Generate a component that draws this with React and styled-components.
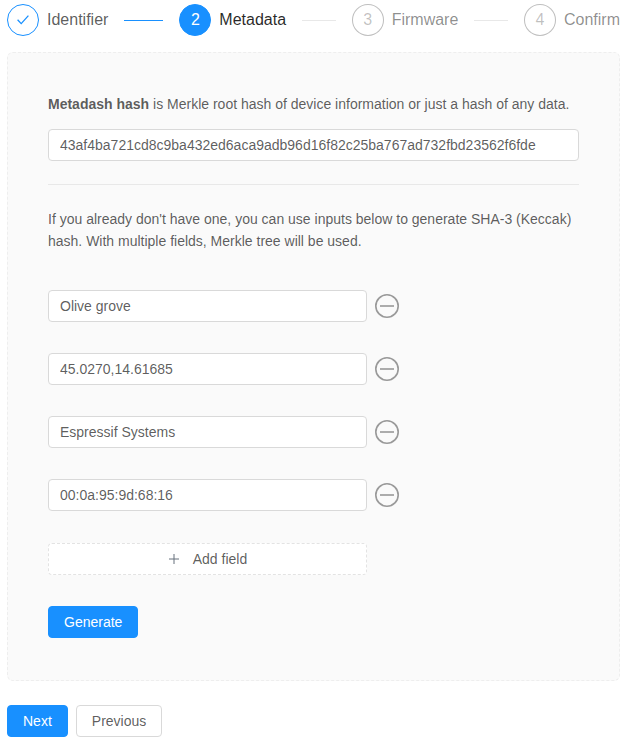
import React from "react";
import styled, { createGlobalStyle } from "styled-components";

const Global = createGlobalStyle`
  html, body { margin: 0; padding: 0; background: #fff; }
  body {
    font-family: "Liberation Sans", Arial, sans-serif;
    font-size: 14px;
    line-height: 22px;
    color: rgba(0, 0, 0, 0.65);
  }
  * { box-sizing: border-box; }
`;

const Page = styled.div`
  padding: 4px 7px 3px;
`;

const Steps = styled.div`
  display: flex;
  height: 32px;
`;

const Step = styled.div`
  display: flex;
  align-items: center;
  flex: ${(p) => (p.$last ? "none" : "1 1 0")};
  margin-right: ${(p) => (p.$last ? "0" : "16px")};
  min-width: 0;
`;

const StepIcon = styled.div`
  width: 32px;
  height: 32px;
  flex: none;
  border-radius: 50%;
  display: flex;
  align-items: center;
  justify-content: center;
  font-size: 16px;
  line-height: 1;
  border: 1px solid
    ${(p) => (p.$status === "wait" ? "rgba(0,0,0,0.25)" : "#1890ff")};
  background: ${(p) => (p.$status === "process" ? "#1890ff" : "#fff")};
  color: ${(p) =>
    p.$status === "process"
      ? "#fff"
      : p.$status === "wait"
      ? "rgba(0,0,0,0.25)"
      : "#1890ff"};
`;

const StepTitle = styled.div`
  margin-left: 8px;
  font-size: 16px;
  line-height: 32px;
  white-space: nowrap;
  color: ${(p) =>
    p.$status === "process"
      ? "rgba(0,0,0,0.85)"
      : p.$status === "wait"
      ? "rgba(0,0,0,0.45)"
      : "rgba(0,0,0,0.65)"};
`;

const StepLine = styled.div`
  flex: 1;
  height: 1px;
  margin-left: 16px;
  background: ${(p) => (p.$done ? "#1890ff" : "#e8e8e8")};
`;

const Panel = styled.div`
  margin-top: 16px;
  padding: 40px 40px 42px;
  height: 629px;
  background: #fafafa;
  border: 1px dashed #eeeeee;
  border-radius: 6px;
`;

const Paragraph = styled.p`
  margin: 0;
`;

const Strong = styled.strong`
  font-weight: 700;
`;

const TextInput = styled.input`
  display: block;
  width: 100%;
  height: 32px;
  padding: 4px 11px;
  font: inherit;
  font-size: 14px;
  color: rgba(0, 0, 0, 0.65);
  background: #fff;
  border: 1px solid #d9d9d9;
  border-radius: 4px;
  outline: none;
`;

const HashInput = styled(TextInput)`
  margin-top: 14px;
`;

const Divider = styled.hr`
  margin: 23px 0;
  height: 1px;
  border: 0;
  background: #e8e8e8;
`;

const Fields = styled.div`
  margin-top: 38px;
  display: flex;
  flex-direction: column;
  gap: 31px;
`;

const FieldRow = styled.div`
  display: flex;
  align-items: center;
  gap: 8px;
`;

const FieldInput = styled(TextInput)`
  width: 319px;
`;

const RemoveIcon = styled.svg`
  width: 24px;
  height: 24px;
  flex: none;
  display: block;
`;

const AddField = styled.button`
  display: flex;
  align-items: center;
  justify-content: center;
  gap: 13px;
  width: 319px;
  height: 32px;
  margin-top: 32px;
  padding: 0 15px;
  font: inherit;
  color: rgba(0, 0, 0, 0.65);
  background: #fff;
  border: 1px dashed #e3e3e3;
  border-radius: 4px;
`;

const Button = styled.button`
  display: block;
  height: 32px;
  padding: 0 15px;
  font: inherit;
  border-radius: 4px;
  border: 1px solid ${(p) => (p.$primary ? "#1890ff" : "#d9d9d9")};
  background: ${(p) => (p.$primary ? "#1890ff" : "#fff")};
  color: ${(p) => (p.$primary ? "#fff" : "rgba(0,0,0,0.65)")};
`;

const GenerateButton = styled(Button)`
  margin-top: 31px;
`;

const Actions = styled.div`
  display: flex;
  gap: 8px;
  margin-top: 24px;
`;

const steps = [
  { title: "Identifier", status: "finish" },
  { title: "Metadata", status: "process", n: 2 },
  { title: "Firmware", status: "wait", n: 3 },
  { title: "Confirm", status: "wait", n: 4 },
];

const fields = [
  "Olive grove",
  "45.0270,14.61685",
  "Espressif Systems",
  "00:0a:95:9d:68:16",
];

const Check = () => (
  <svg width="14" height="14" viewBox="0 0 14 14" fill="none">
    <path d="M1.6 6.8 L5.2 10.6 L12.4 2.6" stroke="#1890ff" strokeWidth="1.3" />
  </svg>
);

const Plus = () => (
  <svg width="12" height="12" viewBox="0 0 12 12" fill="none">
    <path d="M6 1v10M1 6h10" stroke="#66717c" strokeWidth="1" />
  </svg>
);

const Minus = () => (
  <RemoveIcon viewBox="0 0 24 24" fill="none">
    <circle cx="12" cy="12" r="11.2" stroke="#999" strokeWidth="1.6" />
    <path d="M5 12h14" stroke="#999" strokeWidth="1.6" />
  </RemoveIcon>
);

export default function App() {
  return (
    <>
      <Global />
      <Page>
        <Steps>
          {steps.map((s, i) => (
            <Step key={s.title} $last={i === steps.length - 1}>
              <StepIcon $status={s.status}>{s.n ? s.n : <Check />}</StepIcon>
              <StepTitle $status={s.status}>{s.title}</StepTitle>
              {i < steps.length - 1 && <StepLine $done={s.status === "finish"} />}
            </Step>
          ))}
        </Steps>
        <Panel>
          <Paragraph>
            <Strong>Metadash hash</Strong> is Merkle root hash of device
            information or just a hash of any data.
          </Paragraph>
          <HashInput
            readOnly
            value="43af4ba721cd8c9ba432ed6aca9adb96d16f82c25ba767ad732fbd23562f6fde"
          />
          <Divider />
          <Paragraph>
            If you already don't have one, you can use inputs below to generate
            SHA-3 (Keccak) hash. With multiple fields, Merkle tree will be used.
          </Paragraph>
          <Fields>
            {fields.map((f) => (
              <FieldRow key={f}>
                <FieldInput readOnly value={f} />
                <Minus />
              </FieldRow>
            ))}
          </Fields>
          <AddField>
            <Plus />
            <span>Add field</span>
          </AddField>
          <GenerateButton $primary>Generate</GenerateButton>
        </Panel>
        <Actions>
          <Button $primary>Next</Button>
          <Button>Previous</Button>
        </Actions>
      </Page>
    </>
  );
}
